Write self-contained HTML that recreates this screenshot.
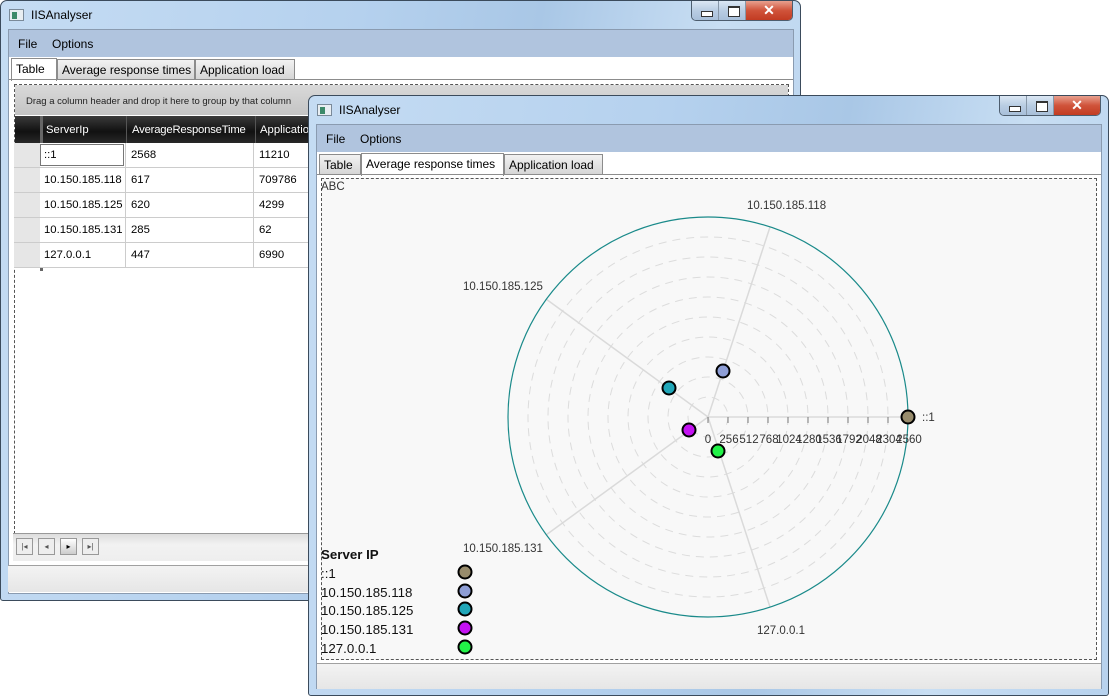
<!DOCTYPE html>
<html><head><meta charset="utf-8"><style>
*{margin:0;padding:0;box-sizing:border-box}
body{width:1109px;height:697px;background:#fff;position:relative;overflow:hidden;font-family:"Liberation Sans",sans-serif;font-size:12px;color:#000}
.a{position:absolute}
.t{font-size:11.3px}
.win{position:absolute;border:1px solid #3b4b5c;border-radius:7px 7px 3px 3px;background:linear-gradient(100deg,#c5dcf3 0%,#b5d1ee 40%,#a9c7e6 60%,#c8def3 80%,#b7d2ee 100%)}
.title{position:absolute;left:30px;top:7px;font-size:12px;color:#000}
.ico{position:absolute;left:8px;top:8px;width:15px;height:12px;background:#e8eef2;border:1px solid #7a8a99}
.ico:before{content:"";position:absolute;left:2px;top:2px;width:5px;height:7px;background:#3c8a6a}
.btns{position:absolute;top:0;height:20px;border:1px solid #4d5d6e;border-top:none;border-radius:0 0 5px 5px;overflow:hidden;display:flex}
.btns div{height:19px}
.bmin,.bmax{width:27px;background:linear-gradient(#dbe7f4,#b9cde3 50%,#a8bfd9);border-right:1px solid #8797a8;position:relative}
.bmin:after{content:"";position:absolute;left:9px;top:10px;width:10px;height:4px;border:1px solid #333;background:#fff}
.bmax:after{content:"";position:absolute;left:9px;top:5px;width:10px;height:8px;border:1px solid #333;border-top-width:2px;background:#fff}
.bcls{width:46px;background:linear-gradient(#e8a08f,#d0533a 50%,#c23b22);color:#fff;font-weight:bold;font-size:14px;text-align:center;line-height:18px}
.client{position:absolute;background:#fff;border:1px solid #8a9bb0}
.menu{position:absolute;left:0;right:0;top:0;height:27px;background:#b0c4de}
.menu span{position:absolute;top:7px;font-size:12px}
.tab{position:absolute;height:21px;border:1px solid #8c8c8c;background:linear-gradient(#f2f2f2,#d6d6d6);padding:3px 4px 0;font-size:12px;white-space:nowrap}
.tab.sel{background:#fff;border-bottom:none;height:23px;top:-2px}
.status{position:absolute;background:linear-gradient(#f3f3f3,#e6e6e6);border-top:1px solid #a0a0a0}
</style></head><body>

<div class="win" style="left:0;top:0;width:801px;height:601px">
 <div class="ico"></div><div class="title">IISAnalyser</div>
 <div class="btns" style="left:690px;width:102px"><div class="bmin"></div><div class="bmax"></div><div class="bcls">✕</div></div>
 <div class="client" style="left:7px;top:28px;width:786px;height:565px">
  <div class="menu"><span style="left:9px">File</span><span style="left:43px">Options</span></div>
  <div class="a" style="left:0;top:27px;width:784px;height:23px">
   <div class="tab sel" style="left:2px;top:1px;width:46px">Table</div>
   <div class="tab" style="left:48px;top:2px;width:138px">Average response times</div>
   <div class="tab" style="left:186px;top:2px;width:100px">Application load</div>
  </div>
  <div class="a" style="left:0;top:49px;width:784px;border-top:1px solid #8c8c8c"></div>
  <div class="a" style="left:5px;top:54px;width:775px;height:450px;border:1px dashed #555;background:#fff">
   <div class="a" style="left:0;top:0;width:773px;height:30px;background:linear-gradient(#d9d9d9,#c4c4c4);font-size:9.5px;padding:11px 0 0 11px;color:#222">Drag a column header and drop it here to group by that column</div>
   <div class="a" style="left:0;top:31px;width:773px;height:28px;background:linear-gradient(#3a3a3a,#111 55%,#2a2a2a)"></div>
   <div class="a" style="left:25px;top:31px;width:3px;height:155px;background:#666"></div>
   <div class="a t" style="left:31px;top:39px;color:#fff">ServerIp</div>
   <div class="a" style="left:111px;top:31px;width:1px;height:28px;background:#555"></div>
   <div class="a t" style="left:117px;top:39px;color:#fff;letter-spacing:-0.2px">AverageResponseTime</div>
   <div class="a" style="left:240px;top:31px;width:1px;height:28px;background:#555"></div>
   <div class="a t" style="left:245px;top:39px;color:#fff">Applicatio</div>
  </div>
 </div>
</div>
<div class="a" style="left:14px;top:143px;width:26px;height:125px;background:#e6e6e6"></div>
<div class="a" style="left:40px;top:143px;width:270px;height:125px;background:#fff"></div>
<div class="a" style="left:14px;top:167px;width:296px;height:1px;background:#ccc"></div>
<div class="a" style="left:14px;top:192px;width:296px;height:1px;background:#ccc"></div>
<div class="a" style="left:14px;top:217px;width:296px;height:1px;background:#ccc"></div>
<div class="a" style="left:14px;top:242px;width:296px;height:1px;background:#ccc"></div>
<div class="a" style="left:14px;top:267px;width:296px;height:1px;background:#ccc"></div>
<div class="a" style="left:125px;top:143px;width:1px;height:125px;background:#ccc"></div>
<div class="a" style="left:253px;top:143px;width:1px;height:125px;background:#ccc"></div>
<div class="a" style="left:40px;top:144px;width:84px;height:22px;border:1px solid #777"></div>
<div class="a t" style="left:44px;top:149px">::1</div><div class="a t" style="left:131px;top:149px">2568</div><div class="a t" style="left:259px;top:149px">11210</div>
<div class="a t" style="left:44px;top:174px">10.150.185.118</div><div class="a t" style="left:131px;top:174px">617</div><div class="a t" style="left:259px;top:174px">709786</div>
<div class="a t" style="left:44px;top:199px">10.150.185.125</div><div class="a t" style="left:131px;top:199px">620</div><div class="a t" style="left:259px;top:199px">4299</div>
<div class="a t" style="left:44px;top:224px">10.150.185.131</div><div class="a t" style="left:131px;top:224px">285</div><div class="a t" style="left:259px;top:224px">62</div>
<div class="a t" style="left:44px;top:249px">127.0.0.1</div><div class="a t" style="left:131px;top:249px">447</div><div class="a t" style="left:259px;top:249px">6990</div>
<div class="a" style="left:13px;top:533px;width:295px;height:28px;background:linear-gradient(#ddd,#f2f2f2 40%,#eee);border-top:1px solid #999"></div>
<div class="a" style="left:16px;top:538px;width:17px;height:17px;border:1px solid #999;background:#eee;font-size:8px;text-align:center;line-height:15px;color:#555">|◂</div>
<div class="a" style="left:38px;top:538px;width:17px;height:17px;border:1px solid #999;background:#eee;font-size:8px;text-align:center;line-height:15px;color:#555">◂</div>
<div class="a" style="left:60px;top:538px;width:17px;height:17px;border:1px solid #999;background:linear-gradient(#fff,#ccc);font-size:8px;text-align:center;line-height:15px;color:#000">▸</div>
<div class="a" style="left:82px;top:538px;width:17px;height:17px;border:1px solid #999;background:#eee;font-size:8px;text-align:center;line-height:15px;color:#555">▸|</div>
<div class="status" style="left:8px;top:565px;width:300px;height:27px"></div>

<div class="win" style="left:308px;top:95px;width:801px;height:601px">
 <div class="ico"></div><div class="title">IISAnalyser</div>
 <div class="btns" style="left:690px;width:102px"><div class="bmin"></div><div class="bmax"></div><div class="bcls">✕</div></div>
 <div class="client" style="left:7px;top:28px;width:786px;height:565px;background:#fff">
  <div class="menu"><span style="left:9px">File</span><span style="left:43px">Options</span></div>
  <div class="a" style="left:0;top:27px;width:784px;height:23px">
   <div class="tab" style="left:2px;top:2px;width:42px">Table</div>
   <div class="tab sel" style="left:44px;top:1px;width:143px">Average response times</div>
   <div class="tab" style="left:187px;top:2px;width:99px">Application load</div>
  </div>
  <div class="a" style="left:0;top:49px;width:784px;border-top:1px solid #8c8c8c"></div>
  <div class="a" style="left:4px;top:53px;width:776px;height:482px;border:1px dashed #555;background:#f8f8f8"></div>
  <div class="status" style="left:0;top:538px;width:784px;height:26px"></div>
 </div>
</div>

<svg class="a" style="left:0;top:0" width="1109" height="697" font-family="Liberation Sans, sans-serif" font-size="11.5">
 <g fill="none" stroke="#dcdcdc" stroke-dasharray="8,6">
  <circle cx="708" cy="417" r="20"/><circle cx="708" cy="417" r="40"/><circle cx="708" cy="417" r="60"/>
  <circle cx="708" cy="417" r="80"/><circle cx="708" cy="417" r="100"/><circle cx="708" cy="417" r="120"/>
  <circle cx="708" cy="417" r="140"/><circle cx="708" cy="417" r="160"/><circle cx="708" cy="417" r="180"/>
 </g>
 <g stroke="#dadada" stroke-width="1.5">
  <line x1="708" y1="417" x2="908" y2="417"/>
  <line x1="708" y1="417" x2="770" y2="227"/>
  <line x1="708" y1="417" x2="546" y2="299"/>
  <line x1="708" y1="417" x2="546" y2="535"/>
  <line x1="708" y1="417" x2="770" y2="607"/>
 </g>
 <circle cx="708" cy="417" r="200" fill="none" stroke="#1a8a8a" stroke-width="1.2"/>
 <g stroke="#777">
  <line x1="708" y1="417" x2="708" y2="423"/><line x1="728" y1="417" x2="728" y2="423"/><line x1="748" y1="417" x2="748" y2="423"/>
  <line x1="768" y1="417" x2="768" y2="423"/><line x1="788" y1="417" x2="788" y2="423"/><line x1="808" y1="417" x2="808" y2="423"/>
  <line x1="828" y1="417" x2="828" y2="423"/><line x1="848" y1="417" x2="848" y2="423"/><line x1="868" y1="417" x2="868" y2="423"/>
  <line x1="888" y1="417" x2="888" y2="423"/>
 </g>
 <g fill="#333" text-anchor="middle">
  <text x="708" y="443">0</text><text x="729" y="443">256</text><text x="749" y="443">512</text><text x="769" y="443">768</text>
  <text x="789" y="443">1024</text><text x="809" y="443">1280</text><text x="829" y="443">1536</text><text x="849" y="443">1792</text>
  <text x="869" y="443">2048</text><text x="889" y="443">2304</text><text x="909" y="443">2560</text>
 </g>
 <g fill="#333">
  <text x="747" y="209">10.150.185.118</text>
  <text x="463" y="290">10.150.185.125</text>
  <text x="463" y="552">10.150.185.131</text>
  <text x="757" y="634">127.0.0.1</text>
  <text x="922" y="421">::1</text>
  <text x="321" y="190">ABC</text>
 </g>
 <g stroke="#000" stroke-width="2">
  <circle cx="908" cy="417" r="6.5" fill="#988c6c"/>
  <circle cx="723" cy="371" r="6.5" fill="#8e9ed6"/>
  <circle cx="669" cy="388" r="6.5" fill="#20a6b8"/>
  <circle cx="689" cy="430" r="6.5" fill="#c412f2"/>
  <circle cx="718" cy="451" r="6.5" fill="#22f248"/>
  <circle cx="465" cy="572" r="6.5" fill="#988c6c"/>
  <circle cx="465" cy="591" r="6.5" fill="#8e9ed6"/>
  <circle cx="465" cy="609" r="6.5" fill="#20a6b8"/>
  <circle cx="465" cy="628" r="6.5" fill="#c412f2"/>
  <circle cx="465" cy="647" r="6.5" fill="#22f248"/>
 </g>
 <g font-size="13.3" fill="#111">
  <text x="321" y="559" font-weight="bold">Server IP</text>
  <text x="321" y="578">::1</text>
  <text x="321" y="597">10.150.185.118</text>
  <text x="321" y="615">10.150.185.125</text>
  <text x="321" y="634">10.150.185.131</text>
  <text x="321" y="653">127.0.0.1</text>
 </g>
</svg>
</body></html>
